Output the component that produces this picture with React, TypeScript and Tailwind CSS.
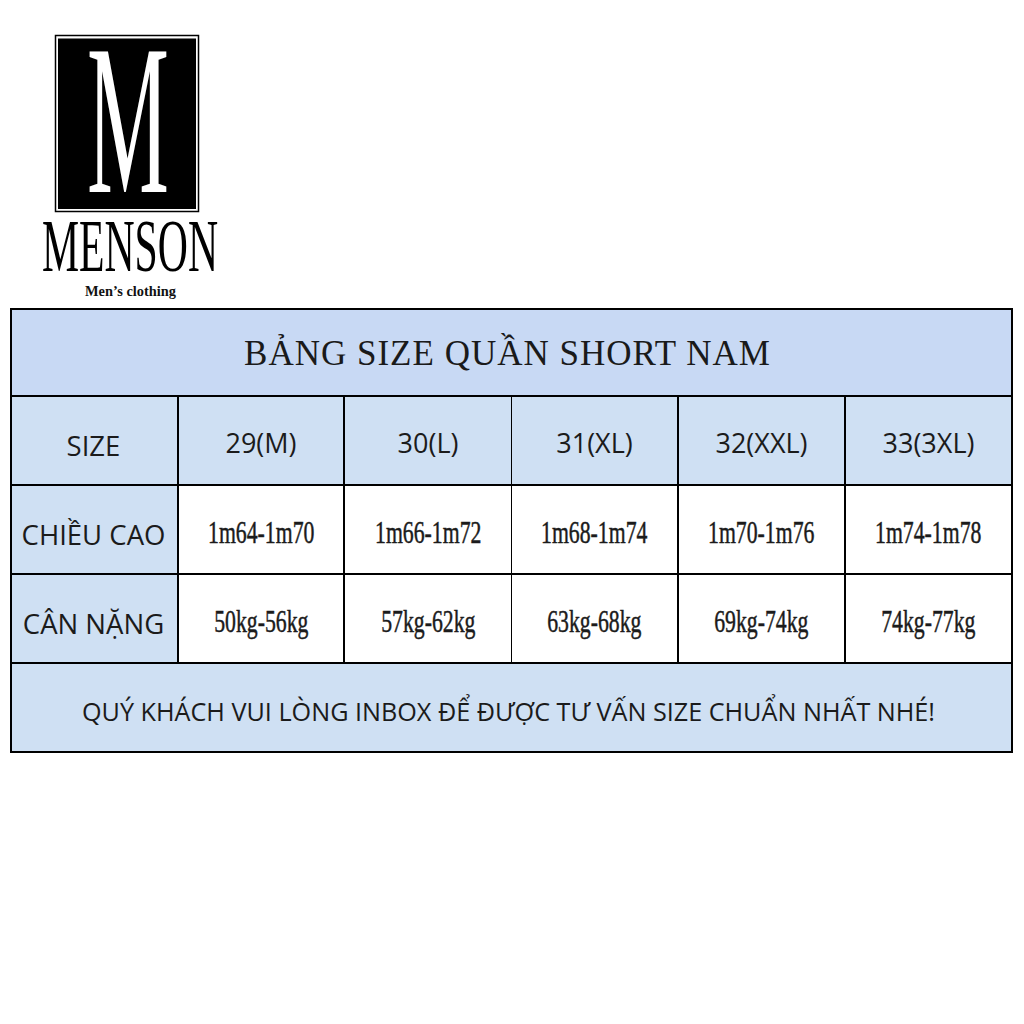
import React from "react";

const sans = { fontFamily: '"Open Sans", "Noto Sans", sans-serif' };

const sizes = ["29(M)", "30(L)", "31(XL)", "32(XXL)", "33(3XL)"];
const heights = ["1m64-1m70", "1m66-1m72", "1m68-1m74", "1m70-1m76", "1m74-1m78"];
const weights = ["50kg-56kg", "57kg-62kg", "63kg-68kg", "69kg-74kg", "74kg-77kg"];

const rightBorder = ["border-r-2", "border-r-2", "border-r", "border-r-2", "border-r-2", "border-r"];

function Row({
  label,
  values,
  kind,
}: {
  label: string;
  values: string[];
  kind: "head" | "data";
}) {
  return (
    <div className="grid grid-cols-[167px_166px_167px_167px_167px_1fr] h-[89px] border-b-2 border-black">
      <div
        className={`${rightBorder[0]} border-black bg-[#cfe0f3] flex items-center justify-center text-[27.5px] text-[#1b1b1b] pt-[10px] pr-[2px]`}
        style={sans}
      >
        {label}
      </div>
      {values.map((v, i) => (
        <div
          key={v}
          className={`${i < 4 ? rightBorder[i + 1] : ""} border-black flex items-center justify-center ${
            kind === "head" ? "bg-[#cfe0f3]" : "bg-white"
          }`}
        >
          {kind === "head" ? (
            <span className="text-[27px] text-[#1b1b1b] pt-[6px]" style={sans}>
              {v}
            </span>
          ) : (
            <span
              className="inline-block text-[32px] text-[#1b1b1b] scale-x-[0.68] pt-[4px] [-webkit-text-stroke:0.5px_#1b1b1b]"
              style={{ fontFamily: '"Liberation Serif", "Times New Roman", serif' }}
            >
              {v}
            </span>
          )}
        </div>
      ))}
    </div>
  );
}

function Logo() {
  return (
    <svg width="190" height="272" viewBox="35 30 190 272" className="block">
      <rect x="55.5" y="35.5" width="143" height="176" fill="none" stroke="#000" strokeWidth="1.5" />
      <rect x="58" y="38.5" width="138" height="170.5" fill="#000" />
      <text
        x="87"
        y="192"
        fill="#fff"
        fontFamily="'Liberation Serif', 'Times New Roman', serif"
        fontSize="215"
        textLength="82"
        lengthAdjust="spacingAndGlyphs"
      >
        M
      </text>
      <text
        x="42"
        y="271"
        fill="#000"
        fontFamily="'Liberation Serif', 'Times New Roman', serif"
        fontSize="73"
        textLength="176"
        lengthAdjust="spacingAndGlyphs"
      >
        MENSON
      </text>
      <text
        x="85"
        y="296"
        fill="#111"
        fontFamily="'Liberation Serif', 'Times New Roman', serif"
        fontSize="15"
        fontWeight="bold"
        textLength="91"
        lengthAdjust="spacingAndGlyphs"
      >
        Men’s clothing
      </text>
    </svg>
  );
}

export default function App() {
  return (
    <div className="w-[1024px] h-[1024px] bg-white overflow-hidden">
      <div className="pl-[35px] pt-[30px]">
        <Logo />
      </div>
      <div className="ml-[10px] mt-[6px] w-[1003px] border-2 border-black border-b-0">
        <div className="h-[87px] border-b-2 border-black bg-[#c8d9f4] flex items-center justify-center pr-[8px]">
          <span
            className="text-[35px] text-[#1a1a1a] tracking-[1px] pt-[4px]"
            style={{ fontFamily: '"Liberation Serif", "Times New Roman", serif' }}
          >
            BẢNG SIZE QUẦN SHORT NAM
          </span>
        </div>
        <Row label="SIZE" values={sizes} kind="head" />
        <Row label="CHIỀU CAO" values={heights} kind="data" />
        <Row label="CÂN NẶNG" values={weights} kind="data" />
        <div className="h-[89px] border-b-2 border-black bg-[#cfe0f3] flex items-center justify-center pr-[6px]">
          <span className="text-[25.2px] text-[#1b1b1b] pt-[8px]" style={sans}>
            QUÝ KHÁCH VUI LÒNG INBOX ĐỂ ĐƯỢC TƯ VẤN SIZE CHUẨN NHẤT NHÉ!
          </span>
        </div>
      </div>
    </div>
  );
}
